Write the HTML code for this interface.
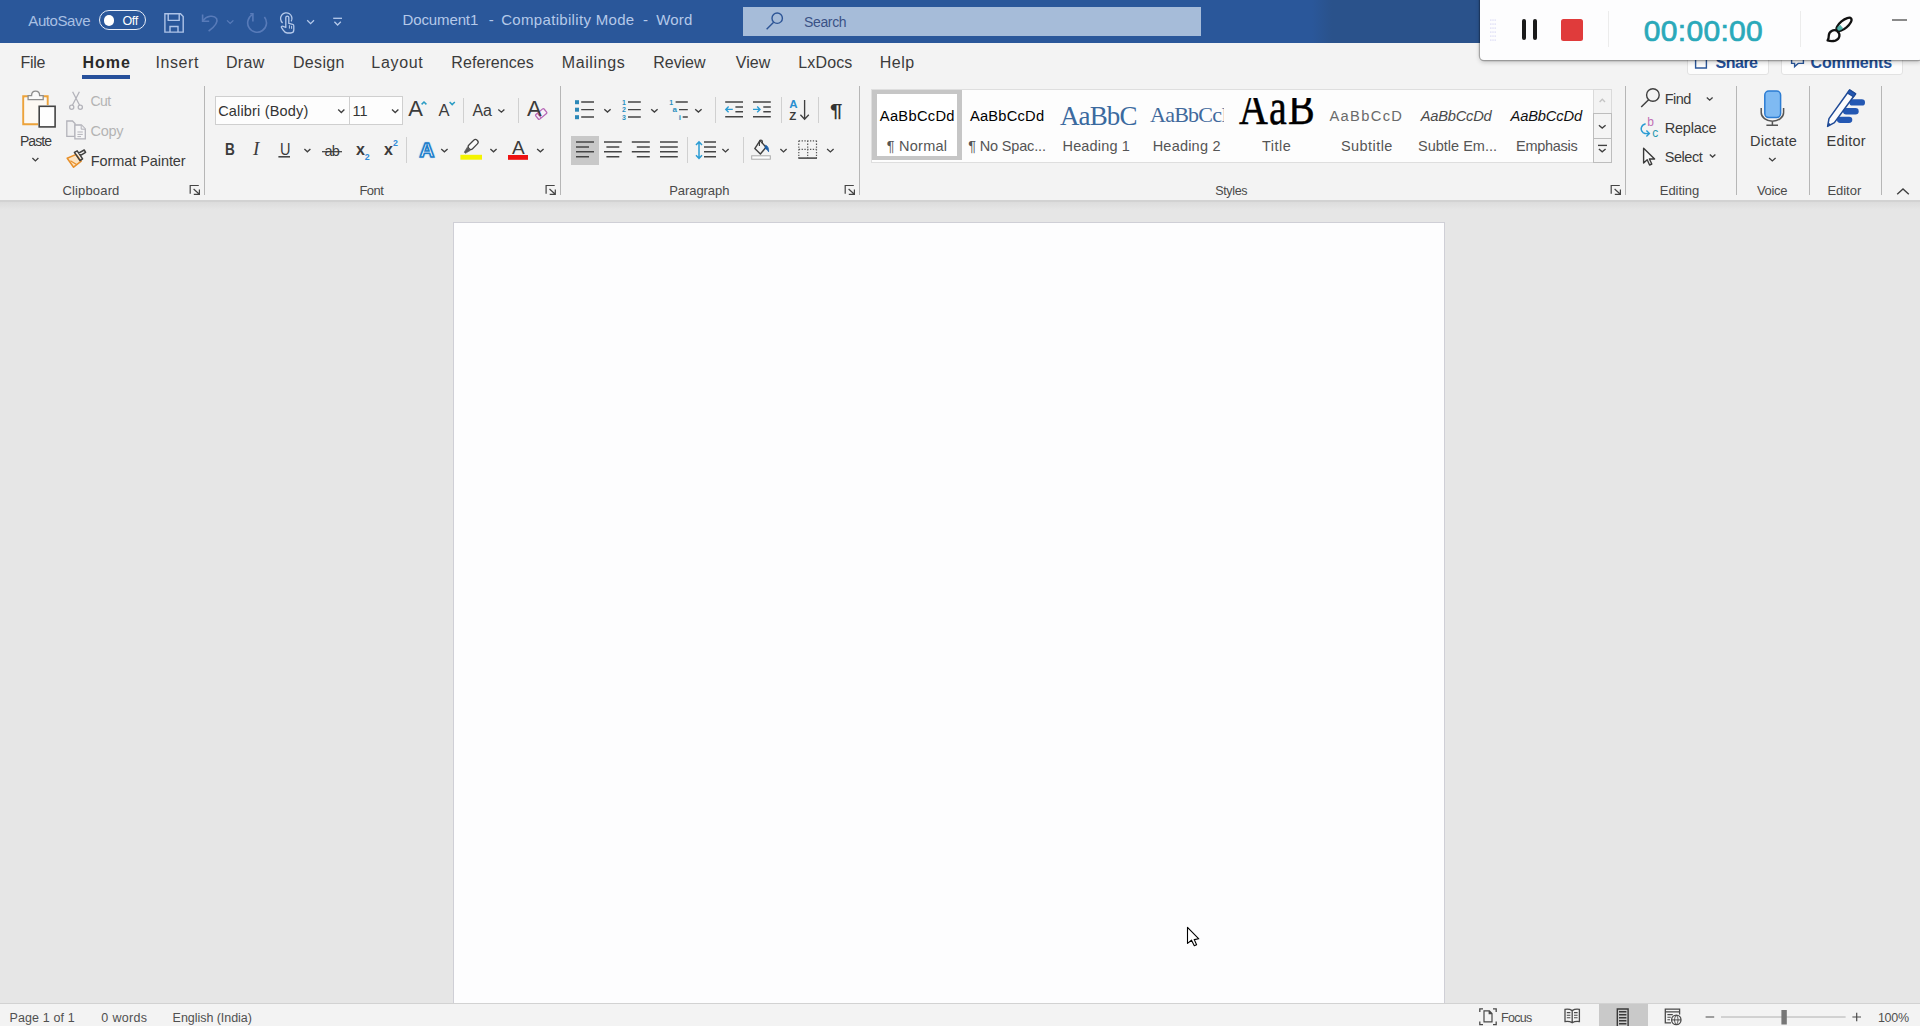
<!DOCTYPE html>
<html><head><meta charset="utf-8"><title>Document1 - Compatibility Mode - Word</title>
<style>
html,body{margin:0;padding:0;}
body{width:1920px;height:1026px;overflow:hidden;background:#e6e6e6;font-family:'Liberation Sans',sans-serif;}
#app{position:relative;width:1920px;height:1026px;overflow:hidden;}
.a{position:absolute;}
.t{position:absolute;line-height:1;white-space:pre;}
svg{position:absolute;overflow:visible;}
.vs{position:absolute;width:1px;background:#d0d0d0;}
.gs{position:absolute;width:1px;background:#b6b6b6;top:86px;height:109px;}
</style></head><body><div id="app">
<!-- title bar -->
<div class="a" style="left:0;top:0;width:1920px;height:43px;background:linear-gradient(90deg,#2a579a 0,#2a579a 1312px,#2a528b 1332px,#2a528b 100%);"></div>
<div class="a" style="left:743px;top:7px;width:458px;height:29px;background:#a6bcd9;"></div>
<!-- tab row + ribbon -->
<div class="a" style="left:0;top:43px;width:1920px;height:157px;background:#f3f3f3;"></div>
<div class="a" style="left:0;top:200px;width:1920px;height:2px;background:#d2d2d2;"></div>
<div class="a" style="left:0;top:202px;width:1920px;height:8px;background:linear-gradient(#dcdcdc,#e6e6e6);"></div>
<div class="a" style="left:82px;top:75px;width:48px;height:3.8px;background:#26509b;"></div>
<!-- page -->
<div class="a" style="left:453px;top:222px;width:992px;height:790px;background:#fdfdfe;border:1px solid #cfcfd6;box-sizing:border-box;"></div>
<!-- status bar -->
<div class="a" style="left:0;top:1003px;width:1920px;height:23px;background:#f3f3f3;border-top:1px solid #d2d2d2;box-sizing:border-box;"></div>
<div class="a" style="left:1598.5px;top:1003.5px;width:49.5px;height:23px;background:#c9c9c9;"></div>
<!-- group separators -->
<div class="gs" style="left:204px"></div>
<div class="gs" style="left:560px"></div>
<div class="gs" style="left:859px"></div>
<div class="gs" style="left:1625px"></div>
<div class="gs" style="left:1736px"></div>
<div class="gs" style="left:1809px"></div>
<div class="gs" style="left:1881px"></div>
<!-- font combos -->
<div class="a" style="left:215px;top:96px;width:188px;height:29px;background:#fdfdfd;border:1px solid #cfcfcf;box-sizing:border-box;"></div>
<div class="a" style="left:348.5px;top:96px;width:1px;height:29px;background:#cfcfcf;"></div>
<!-- small separators -->
<div class="vs" style="left:463px;top:98px;height:25px"></div>
<div class="vs" style="left:518px;top:98px;height:25px"></div>
<div class="vs" style="left:406px;top:137px;height:26px"></div>
<div class="vs" style="left:715px;top:97px;height:26px"></div>
<div class="vs" style="left:780.5px;top:97px;height:26px"></div>
<div class="vs" style="left:817.5px;top:97px;height:26px"></div>
<div class="vs" style="left:687px;top:137px;height:26px"></div>
<div class="vs" style="left:742.5px;top:137px;height:26px"></div>
<!-- align-left selected -->
<div class="a" style="left:571px;top:136px;width:28px;height:29px;background:#c8c8c8;"></div>
<!-- styles gallery -->
<div class="a" style="left:871px;top:89px;width:741px;height:74px;background:#fdfdfd;border:1px solid #dedede;box-sizing:border-box;"></div>
<div class="a" style="left:872px;top:90px;width:90px;height:70px;border:solid #c6c6c6;border-width:4px 5px;box-sizing:border-box;background:#fff;"></div>
<div class="a" style="left:1593px;top:89px;width:19px;height:25px;border:1px solid #dadada;box-sizing:border-box;background:#f3f3f3;"></div>
<div class="a" style="left:1593px;top:113px;width:19px;height:25.5px;border:1px solid #bdbdbd;box-sizing:border-box;background:#f4f4f4;"></div>
<div class="a" style="left:1593px;top:137.5px;width:19px;height:25px;border:1px solid #bdbdbd;box-sizing:border-box;background:#f4f4f4;"></div>
<!-- big Title sample (clipped) -->
<div class="a" style="left:1236px;top:97.7px;width:78.6px;height:32px;overflow:hidden;"><span class="t" style="left:3.4px;top:-15.7px;font-family:'Liberation Serif',serif;font-size:50px;color:#000;-webkit-text-stroke:.5px #000;letter-spacing:1.5px;transform:scaleX(.8);transform-origin:0 0;">AaB</span></div>
<!-- heading 2 sample (clipped) -->
<div class="a" style="left:1146px;top:100px;width:77.9px;height:30px;overflow:hidden;"><span class="t" style="left:4px;top:3.8px;font-family:'Liberation Serif',serif;font-size:22px;color:#41699c;letter-spacing:-.75px;">AaBbCcI</span></div>
<!-- share / comments buttons (behind widget) -->
<div class="a" style="left:1687px;top:45px;width:82px;height:30px;background:#fdfdfd;border:1px solid #e2e2e2;border-radius:3px;box-sizing:border-box;"></div>
<div class="a" style="left:1781px;top:45px;width:122px;height:30px;background:#fdfdfd;border:1px solid #e2e2e2;border-radius:3px;box-sizing:border-box;"></div>
<!-- title bar icons -->
<div class="a" style="left:98.8px;top:10.2px;width:47.4px;height:19.6px;border:1.4px solid #e8eef8;border-radius:10px;box-sizing:border-box;"></div>
<div class="a" style="left:103.6px;top:14.9px;width:10.8px;height:10.8px;border-radius:50%;background:#fff;"></div>
<svg style="left:0;top:0" width="360" height="43" viewBox="0 0 360 43" fill="none" stroke-width="1.4">
 <g stroke="#aec4e8">
  <path d="M164.9 13.8 H180.5 L183.2 16.5 V32.1 H164.9 Z"/>
  <path d="M168.2 13.8 V20.4 H179.2 V13.8"/>
  <path d="M170 32.1 V26.5 H178 V32.1"/>
 </g>
 <g stroke="#587bb9" stroke-width="1.6">
  <path d="M202.6 14.6 V21.2 H209.2"/>
  <path d="M203 20.8 C206.5 15.8 214 14.6 216.6 18.6 C218.6 22.4 213.5 27.5 208.6 31.2"/>
  <path d="M227 20.4 L230.2 23.4 L233.4 20.4" stroke-width="1.3"/>
  <path d="M250.2 13.8H252.9V21.4"/>
  <path d="M252.9 14.4A9.4 9.4 0 1 0 264.4 16.9"/>
 </g>
 <g stroke="#b6caeb" stroke-width="1.3">
  <path d="M282.6 22.9 A5.7 5.7 0 1 1 291.2 21.4"/>
  <path d="M285.8 27.5 V17.6 A1.5 1.5 0 0 1 288.8 17.6 V23.4 L292.6 24.3 A1.6 1.6 0 0 1 293.8 26 V29.8 C293.8 31.8 292.5 33 290.8 33 H287.2 C285.6 33 284.3 32 283.2 30.2 L281.4 27.4 C281 26.4 282.3 25.6 283.2 26.4 Z" stroke-linejoin="round"/>
  <path d="M289.4 25.2 V28.6 M291.6 25.8 V28.8" stroke-width="1"/>
  <path d="M307.2 20.3 L310.6 23.6 L314 20.3"/>
  <path d="M333.2 18.3 H342"/>
  <path d="M334.4 21.8 L337.6 25 L340.8 21.8"/>
 </g>
</svg>
<!-- search icon -->
<svg style="left:760px;top:8px" width="30" height="28" viewBox="760 8 30 28" fill="none" stroke="#2d5596" stroke-width="1.4">
 <circle cx="777.2" cy="18.2" r="5.2"/><path d="M773.6 22.2 L766.6 29.2"/>
</svg>
<!-- ribbon icons: coordinates are page pixels -->
<svg style="left:0;top:80px" width="1920" height="125" viewBox="0 80 1920 125" fill="none" stroke-linecap="butt">
<!-- paste -->
<g>
 <path d="M29 96.4 H23.3 V124.2 H38 M42.5 96.4 H47.6 V105" stroke="#eda33a" stroke-width="2.1"/>
 <path d="M24.4 97.5 H46.5 V123 H24.4 Z" fill="#fdf9f3" stroke="none"/>
 <path d="M28.1 99.6 V95.6 H31.6 C31.6 92.6 33.4 91.2 35.6 91.2 C37.8 91.2 39.6 92.6 39.6 95.6 H43.2 V99.6 Z" stroke="#8e8e8e" stroke-width="1.3" fill="#fbfbfb"/>
 <rect x="39.2" y="106.3" width="15.9" height="20.6" fill="#fefefe" stroke="#444" stroke-width="1.6"/>
</g>
<!-- cut (disabled) -->
<g stroke="#b3b3ba" stroke-width="1.3">
 <path d="M72.6 91.8 L79.6 105.2 M79.4 91.8 L72.4 105.2"/>
 <circle cx="71.7" cy="107.3" r="2.1"/><circle cx="80.3" cy="107.3" r="2.1"/>
</g>
<!-- copy (disabled) -->
<g stroke="#b3b3ba" stroke-width="1.3" fill="#f0f0f1">
 <path d="M66.8 121 H72.5 L75 123.6 V136.4 H66.8 Z"/>
 <path d="M74.9 125 H81.4 L85.3 129 V138.8 H74.9 Z" fill="#f6f6f7"/>
 <path d="M81.2 125.2 V129.2 H85.2 M77.4 132 H82.8 M77.4 134.4 H82.8 M77.4 136.6 H81" stroke-width="1"/>
</g>
<!-- format painter -->
<g>
 <path d="M67.2 158.2 L76.2 154.4 L81.2 161.2 L73.6 167.2 Z" fill="#fbe3c3" stroke="#e8902a" stroke-width="1.5" stroke-linejoin="round"/>
 <path d="M70.4 160.8 L76.6 164.6" stroke="#e8902a" stroke-width="1.2"/>
 <path d="M74.4 152.4 L77.2 150.8 L82.6 158.8 L80 160.6 Z M78.2 153.4 L84.2 150 L85.6 152.4 L79.8 155.8" stroke="#3f3f3f" stroke-width="1.5" stroke-linejoin="round"/>
</g>
</svg>
<svg style="left:0;top:80px" width="1920" height="125" viewBox="0 80 1920 125" fill="none" stroke="#404040" stroke-width="1.35">
<path d="M32.4 158.1L35.4 160.9L38.4 158.1M338.2 109.6L341.3 112.5L344.4 109.6M392.0 109.6L395.2 112.5L398.4 109.6M498.3 109.4L501.4 112.2L504.4 109.4M304.4 149.1L307.4 151.8L310.4 149.1M441.2 149.1L444.4 151.8L447.6 149.1M490.4 149.1L493.5 151.8L496.6 149.1M537.1 149.1L540.4 151.8L543.6 149.1M604.3 109.2L607.5 112.1L610.6 109.2M651.2 109.2L654.4 112.1L657.6 109.2M695.2 109.2L698.4 112.1L701.6 109.2M722.4 149.1L725.5 151.9L728.6 149.1M780.4 149.1L783.5 151.9L786.6 149.1M827.1 149.1L830.4 151.9L833.6 149.1M1706.8 97.6L1709.7 100.2L1712.6 97.6M1709.8 154.6L1712.6 157.0L1715.4 154.6M1769.1 158.1L1772.3 160.9L1775.6 158.1M1598.9 125.2L1602.2 128.0L1605.6 125.2M1598.9 149.0L1602.2 151.8L1605.6 149.0"/>
<path d="M1599.6 102L1602.3 99.2L1605 102" stroke="#c4c4c4"/>
<path d="M1598 145.4H1607"/>
<path d="M1897.2 194.2L1903 188.9L1908.8 194.2" stroke-width="1.4"/>
</svg>
<svg style="left:0;top:80px" width="1920" height="125" viewBox="0 80 1920 125" fill="none">
<!-- grow/shrink carets -->
<path d="M421.6 104.4L424 102L426.4 104.4M449.6 102L452.2 104.6L454.8 102" stroke="#2a9cc4" stroke-width="1.5"/>
<!-- clear formatting eraser -->
<g transform="rotate(-40 541.2 114)"><rect x="535.8" y="111" width="10.8" height="6" rx="1" fill="#f7f0f7" stroke="#b565b5" stroke-width="1.3"/><path d="M538.8 111V117" stroke="#b565b5" stroke-width="1.2"/></g>
<!-- underline of U -->
<path d="M278.4 156.8H290" stroke="#3b3b3b" stroke-width="1.5"/>
<!-- strike through ab -->
<path d="M322 151.7H342" stroke="#3b3b3b" stroke-width="1.2"/>
<!-- highlighter -->
<g transform="rotate(45 470.6 147)"><rect x="468" y="137.6" width="5.2" height="11.6" rx="2.4" stroke="#444" stroke-width="1.25" fill="#fbfbfb"/><path d="M468.4 149.6H472.8L471.4 155.2H469.8Z" fill="#5a5a5a" stroke="#5a5a5a" stroke-width=".6"/></g>
<rect x="460.4" y="154.8" width="21.6" height="4.9" fill="#f4f400"/>
<rect x="508" y="155" width="20" height="4.8" fill="#ee1111"/>
<!-- bullets -->
<g fill="#2b88b8"><rect x="575" y="100.2" width="4" height="4"/><rect x="575" y="107.7" width="4" height="4"/><rect x="575" y="115.2" width="4" height="4"/></g>
<path d="M581.2 102H594M581.2 109.6H594M581.2 117H594 M628 102H640.8M628 109.6H640.8M628 117H640.8 M675.6 102H687.8M679 109.6H687.8M682.7 117H687.8" stroke="#454545" stroke-width="1.3"/>
<!-- indent icons -->
<path d="M725.2 102H743M725.2 116.8H743M735.4 107H743M735.4 111.8H743 M753 102H770.8M753 116.8H770.8M763.3 107H770.8M763.3 111.8H770.8" stroke="#454545" stroke-width="1.4"/>
<path d="M732.8 109.4H725.8M728.6 106.6L725.8 109.4L728.6 112.2 M753 109.4H760M757.2 106.6L760 109.4L757.2 112.2" stroke="#2a9cd4" stroke-width="1.4"/>
<!-- sort arrow -->
<path d="M804.6 100V119M800.4 114.8L804.6 119.2L808.8 114.8" stroke="#404040" stroke-width="1.35"/>
<!-- align icons -->
<path d="M576 142H594M576 147H589M576 151.8H594M576 156.8H589 M604 142H621.8M606.4 147H619.3M604 151.8H621.8M606.4 156.8H619.3 M631.8 142H649.8M636.8 147H649.8M631.8 151.8H649.8M636.8 156.8H649.8 M660 142H677.8M660 147H677.8M660 151.8H677.8M660 156.8H677.8 M704 142H716M704 147H716M704 151.8H716M704 156.8H716" stroke="#454545" stroke-width="1.5"/>
<!-- line spacing arrow -->
<path d="M699 142V158.2M696 145L699 141.8L702 145M696 155.2L699 158.4L702 155.2" stroke="#2a9cd4" stroke-width="1.5"/>
<!-- shading -->
<path d="M760 140.6L754.8 148.6L760.4 154L766 147.2Z" stroke="#404040" stroke-width="1.4" stroke-linejoin="round"/>
<path d="M759.4 146V141.6A1.5 1.5 0 0 1 762.4 141.6V143.6" stroke="#404040" stroke-width="1.2"/>
<path d="M765.6 145.2C768 146 768.8 148.6 768.6 151.8C767.6 150 766.6 149 765 148.4Z" fill="#1d5fa8" stroke="#1d5fa8" stroke-width=".8"/>
<rect x="751.7" y="155.8" width="18.6" height="3.4" fill="#fdfdfd" stroke="#ababab" stroke-width="1"/>
<!-- borders -->
<path d="M798.8 140.8H816.6M798.8 149.4H816.6M798.8 140.8V158M807.7 140.8V158M816.5 140.8V158" stroke="#555" stroke-width="1.2" stroke-dasharray="1.3 1.5"/>
<path d="M798.3 158.1H817" stroke="#404040" stroke-width="1.5"/>
<!-- find -->
<circle cx="1652.9" cy="95" r="6.3" stroke="#404040" stroke-width="1.4"/><path d="M1648.6 99.8L1641.2 107" stroke="#404040" stroke-width="1.5"/>
<!-- replace arrow -->
<path d="M1645.6 123.8C1641.2 125 1639.6 129.6 1643 132.6C1644.4 133.6 1646.4 133.8 1649 133.6M1646.4 130.6L1649.4 133.6L1646.4 136.6" stroke="#2a9cd4" stroke-width="1.4"/>
<!-- select cursor -->
<path d="M1643.6 148.2V163L1647.2 159.8L1649.6 165L1651.8 164L1649.4 159L1654.6 159Z" stroke="#3a3a3a" stroke-width="1.4" stroke-linejoin="round" fill="#f8f8f8"/>
<!-- dictate mic -->
<rect x="1764.8" y="91" width="15.8" height="26.6" rx="4" fill="#7fbaf2" stroke="#2b7cd3" stroke-width="1.5"/>
<path d="M1761.2 108V112.6A11.2 8.6 0 0 0 1783.6 112.6V108M1772.4 121.2V125M1766.4 125.2H1778" stroke="#555" stroke-width="1.5"/>
<!-- editor -->
<g fill="#2458b3"><rect x="1849.4" y="99.2" width="15.6" height="6.4" rx="3.2"/><rect x="1843" y="108" width="15.7" height="6.4" rx="3.2"/><rect x="1837" y="116.7" width="15.3" height="6.3" rx="3.2"/></g>
<path d="M1849.6 90L1855.6 93.8L1834.4 122.6L1827.6 126.4L1829 118.6Z" fill="#fcfcfd" stroke="#1f4a96" stroke-width="1.5" stroke-linejoin="round"/>
<path d="M1849.6 90L1855.6 93.8L1853.4 96.8L1847.4 93Z" fill="#2458b3" stroke="#1f4a96" stroke-width="1.2" stroke-linejoin="round"/>
<path d="M1827.6 126.4L1828.4 122.4L1831 124.4Z" fill="#1f4a96"/>
</svg>
<!-- dialog launchers -->
<svg style="left:0;top:180px" width="1920" height="20" viewBox="0 180 1920 20" fill="none" stroke="#444" stroke-width="1.2">
<g id="lch"><path d="M190.2 193.8V185.5H198.8M193.6 189L199.4 194.2M199.4 189.6V194.3H193.8"/></g>
<path transform="translate(355.9 0)" d="M190.2 193.8V185.5H198.8M193.6 189L199.4 194.2M199.4 189.6V194.3H193.8"/>
<path transform="translate(655 0)" d="M190.2 193.8V185.5H198.8M193.6 189L199.4 194.2M199.4 189.6V194.3H193.8"/>
<path transform="translate(1421 0)" d="M190.2 193.8V185.5H198.8M193.6 189L199.4 194.2M199.4 189.6V194.3H193.8"/>
</svg>
<!-- share / comments icons (partly hidden under widget) -->
<svg style="left:1680px;top:50px" width="240" height="30" viewBox="1680 50 240 30" fill="none" stroke="#2b579a" stroke-width="1.4">
<path d="M1695.6 59V68H1706.4V59"/>
<path d="M1791.6 58V63.4H1794.6V66.6L1798.2 63.4H1803.4V58"/>
</svg>
<!-- status bar icons -->
<svg style="left:1470px;top:1003px" width="450" height="23" viewBox="1470 1003 450 23" fill="none" stroke="#4a4a4a" stroke-width="1.3">
<path d="M1479.8 1012V1008.9H1483M1493 1008.9H1496.2V1012M1479.8 1021.4V1024.6H1483M1493 1024.6H1496.2V1021.4"/>
<path d="M1484 1010.8H1489.4L1492 1013.4V1021.8H1484ZM1489.2 1011V1013.6H1491.8" stroke-width="1.2"/>
<path d="M1572.2 1010.6C1570 1009.2 1567.4 1009 1565 1009.4V1021.6C1567.4 1021.2 1570 1021.4 1572.2 1022.8C1574.400 1021.4 1577 1021.200 1579.400 1021.600V1009.400C1577 1009 1574.400 1009.200 1572.200 1010.600ZM1572.200 1010.600V1022.800"/>
<path d="M1566.800 1012.600H1570.400M1566.800 1015.200H1570.400M1566.800 1017.800H1570.400M1574 1012.600H1577.600M1574 1015.200H1577.600M1574 1017.800H1577.600" stroke-width="1.100"/>
<path d="M1617.300 1027V1009H1628.100V1027" stroke="#3a3a3a" stroke-width="1.400"/>
<path d="M1619 1011.800H1626.400M1619 1014.800H1626.400M1619 1017.800H1626.400M1619 1020.800H1626.400M1619 1023.800H1626.400" stroke="#3a3a3a" stroke-width="1.500"/>
<path d="M1671 1022.800H1665.300V1009.200H1679.600V1014.500M1665.300 1011.800H1679.600"/>
<path d="M1667.400 1014.600H1672.800M1667.400 1017.200H1670.800M1667.400 1019.800H1670" stroke-width="1.100"/>
<circle cx="1676.300" cy="1019.900" r="4.700" fill="#f3f3f3" stroke-width="1.300"/>
<path d="M1671.600 1019.900H1681M1676.300 1015.200C1674 1017.600 1674 1022.200 1676.300 1024.600M1676.300 1015.200C1678.600 1017.600 1678.600 1022.200 1676.300 1024.600" stroke-width="1"/>
<path d="M1705.600 1017H1714.200M1852.400 1017H1861M1856.700 1012.700V1021.300" stroke-width="1.200"/>
<path d="M1721 1017H1845.600" stroke="#b0b0b0" stroke-width="1"/>
<rect x="1781.400" y="1010" width="5.400" height="14.500" fill="#777" stroke="none"/>
</svg>
<!-- mouse cursor -->
<svg style="left:1180px;top:920px" width="30" height="34" viewBox="1180 920 30 34"><path d="M1187.500 927.400V943.400L1191.500 940.200L1194.300 945.800L1196.600 944.800L1194.200 939.600L1198.800 938.800Z" fill="#fff" stroke="#000" stroke-width="1.100" stroke-linejoin="round"/></svg>
<div class="a" style="left:0;top:0;width:1920px;height:80px;z-index:5;pointer-events:none;">
<!-- recorder widget -->
<div class="a" style="left:1480px;top:-10px;width:442px;height:69.7px;background:#fdfdfe;border-radius:0 0 4px 4px;box-shadow:0 0 0 1.2px rgba(0,0,0,.25),0 2px 5px rgba(0,0,0,.22);"></div>
<div class="a" style="left:1522px;top:19px;width:4.2px;height:20.8px;border-radius:2.2px;background:#1b1b1b;"></div>
<div class="a" style="left:1533px;top:19px;width:4.2px;height:20.8px;border-radius:2.2px;background:#1b1b1b;"></div>
<div class="a" style="left:1561px;top:19px;width:22px;height:21.5px;border-radius:2.5px;background:#e03b3b;"></div>
<div class="a" style="left:1607.5px;top:11px;width:1px;height:36px;background:#ececec;"></div>
<div class="a" style="left:1800px;top:11px;width:1px;height:36px;background:#ececec;"></div>
<div class="a" style="left:1892px;top:19px;width:14.5px;height:1.5px;background:#8a8a8a;"></div>
<!-- widget brush icon + drag dots -->
<svg style="left:1480px;top:0" width="440" height="60" viewBox="1480 0 440 60" fill="none">
<g transform="rotate(-40 1844 24.4)"><ellipse cx="1844" cy="24.4" rx="9.3" ry="3.9" fill="#fdfdfd" stroke="#111" stroke-width="2.3"/><path d="M1835.8 22.6C1837.8 21.8 1839.8 22 1840.8 22.6V26.8C1838.6 27.4 1836.8 26.8 1835.4 26Z" fill="#2a9d94" opacity=".8"/></g>
<path d="M1837 30.8C1833.400 29 1829 31.600 1828.800 35.400C1828.800 37.400 1828.600 38.800 1827.600 40.400C1830 41.200 1833 41.200 1835.400 40.600C1839.800 39.200 1841 34 1837 30.800Z" fill="#fdfdfd" stroke="#111" stroke-width="2.300" stroke-linejoin="round"/>
<g fill="#d3d3f3"><rect x="1490.2" y="19.5" width="1.2" height="1.2"/><rect x="1492.4" y="19.5" width="1.2" height="1.2"/><rect x="1494.6" y="19.5" width="1.2" height="1.2"/><rect x="1490.2" y="23.5" width="1.2" height="1.2"/><rect x="1492.4" y="23.5" width="1.2" height="1.2"/><rect x="1494.6" y="23.5" width="1.2" height="1.2"/><rect x="1490.2" y="27.5" width="1.2" height="1.2"/><rect x="1492.4" y="27.5" width="1.2" height="1.2"/><rect x="1494.6" y="27.5" width="1.2" height="1.2"/><rect x="1490.2" y="31.5" width="1.2" height="1.2"/><rect x="1492.4" y="31.5" width="1.2" height="1.2"/><rect x="1494.6" y="31.5" width="1.2" height="1.2"/><rect x="1490.2" y="35.5" width="1.2" height="1.2"/><rect x="1492.4" y="35.5" width="1.2" height="1.2"/><rect x="1494.6" y="35.5" width="1.2" height="1.2"/><rect x="1490.2" y="39.5" width="1.2" height="1.2"/><rect x="1492.4" y="39.5" width="1.2" height="1.2"/><rect x="1494.6" y="39.5" width="1.2" height="1.2"/></g>
</svg>
</div>

<!-- texts -->
<span class=t style="left:28.3px;top:13.0px;font-family:'Liberation Sans',sans-serif;font-size:15px;color:#a9c0e3;letter-spacing:-0.41px">AutoSave</span>
<span class=t style="left:122.6px;top:15.0px;font-family:'Liberation Sans',sans-serif;font-size:12.5px;color:#ffffff;letter-spacing:-0.45px">Off</span>
<span class=t style="left:402.5px;top:12.0px;font-family:'Liberation Sans',sans-serif;font-size:15px;color:#b5c9e9;letter-spacing:-0.12px">Document1</span>
<span class=t style="left:488.7px;top:12.0px;font-family:'Liberation Sans',sans-serif;font-size:15px;color:#b5c9e9;letter-spacing:0.00px">-</span>
<span class=t style="left:501.2px;top:12.0px;font-family:'Liberation Sans',sans-serif;font-size:15px;color:#b5c9e9;letter-spacing:0.32px">Compatibility Mode</span>
<span class=t style="left:643.0px;top:12.0px;font-family:'Liberation Sans',sans-serif;font-size:15px;color:#b5c9e9;letter-spacing:0.00px">-</span>
<span class=t style="left:656.2px;top:12.0px;font-family:'Liberation Sans',sans-serif;font-size:15px;color:#b5c9e9;letter-spacing:0.17px">Word</span>
<span class=t style="left:804.0px;top:15.0px;font-family:'Liberation Sans',sans-serif;font-size:14px;color:#3a5286;letter-spacing:-0.36px">Search</span>
<span class=t style="left:20.6px;top:55.0px;font-family:'Liberation Sans',sans-serif;font-size:16px;color:#3b3b3b;letter-spacing:-0.33px">File</span>
<span class=t style="left:82.5px;top:55.0px;font-family:'Liberation Sans',sans-serif;font-size:16px;font-weight:bold;color:#2a2a2a;letter-spacing:0.97px">Home</span>
<span class=t style="left:155.6px;top:55.0px;font-family:'Liberation Sans',sans-serif;font-size:16px;color:#3b3b3b;letter-spacing:0.56px">Insert</span>
<span class=t style="left:225.9px;top:55.0px;font-family:'Liberation Sans',sans-serif;font-size:16px;color:#3b3b3b;letter-spacing:0.37px">Draw</span>
<span class=t style="left:293.0px;top:55.0px;font-family:'Liberation Sans',sans-serif;font-size:16px;color:#3b3b3b;letter-spacing:0.32px">Design</span>
<span class=t style="left:371.3px;top:55.0px;font-family:'Liberation Sans',sans-serif;font-size:16px;color:#3b3b3b;letter-spacing:0.68px">Layout</span>
<span class=t style="left:451.3px;top:55.0px;font-family:'Liberation Sans',sans-serif;font-size:16px;color:#3b3b3b;letter-spacing:0.08px">References</span>
<span class=t style="left:561.7px;top:55.0px;font-family:'Liberation Sans',sans-serif;font-size:16px;color:#3b3b3b;letter-spacing:0.61px">Mailings</span>
<span class=t style="left:653.3px;top:55.0px;font-family:'Liberation Sans',sans-serif;font-size:16px;color:#3b3b3b;letter-spacing:-0.06px">Review</span>
<span class=t style="left:735.7px;top:55.0px;font-family:'Liberation Sans',sans-serif;font-size:16px;color:#3b3b3b;letter-spacing:0.10px">View</span>
<span class=t style="left:798.3px;top:55.0px;font-family:'Liberation Sans',sans-serif;font-size:16px;color:#3b3b3b;letter-spacing:0.14px">LxDocs</span>
<span class=t style="left:879.7px;top:55.0px;font-family:'Liberation Sans',sans-serif;font-size:16px;color:#3b3b3b;letter-spacing:0.53px">Help</span>
<span class=t style="left:1715.6px;top:55.0px;font-family:'Liberation Sans',sans-serif;font-size:16px;font-weight:bold;color:#234f96;letter-spacing:-0.52px">Share</span>
<span class=t style="left:1810.6px;top:55.0px;font-family:'Liberation Sans',sans-serif;font-size:16px;font-weight:bold;color:#234f96;letter-spacing:-0.16px">Comments</span>
<span class=t style="left:19.9px;top:134.0px;font-family:'Liberation Sans',sans-serif;font-size:14px;color:#3b3b3b;letter-spacing:-0.90px">Paste</span>
<span class=t style="left:90.5px;top:94.0px;font-family:'Liberation Sans',sans-serif;font-size:14px;color:#b4b4b4;letter-spacing:-0.60px">Cut</span>
<span class=t style="left:90.5px;top:124.0px;font-family:'Liberation Sans',sans-serif;font-size:14.5px;color:#b4b4b4;letter-spacing:-0.27px">Copy</span>
<span class=t style="left:90.7px;top:154.0px;font-family:'Liberation Sans',sans-serif;font-size:14.5px;color:#3b3b3b;letter-spacing:-0.07px">Format Painter</span>
<span class=t style="left:62.5px;top:184.0px;font-family:'Liberation Sans',sans-serif;font-size:13px;color:#4a4a4a;letter-spacing:0.15px">Clipboard</span>
<span class=t style="left:218.2px;top:104.0px;font-family:'Liberation Sans',sans-serif;font-size:14.5px;color:#333;letter-spacing:0.17px">Calibri (Body)</span>
<span class=t style="left:352.4px;top:104.0px;font-family:'Liberation Sans',sans-serif;font-size:14.5px;color:#333;letter-spacing:0.00px">11</span>
<span class=t style="left:472.5px;top:103.0px;font-family:'Liberation Sans',sans-serif;font-size:16px;color:#3b3b3b;letter-spacing:-0.20px">Aa</span>
<span class=t style="left:408.3px;top:98.0px;font-family:'Liberation Sans',sans-serif;font-size:22px;color:#3b3b3b;letter-spacing:0.00px">A</span>
<span class=t style="left:438.5px;top:102.0px;font-family:'Liberation Sans',sans-serif;font-size:16.5px;color:#3b3b3b;letter-spacing:0.00px">A</span>
<span class=t style="left:527.0px;top:98.0px;font-family:'Liberation Sans',sans-serif;font-size:22px;color:#3b3b3b;letter-spacing:0.00px">A</span>
<span class=t style="left:512.0px;top:138.0px;font-family:'Liberation Sans',sans-serif;font-size:19px;color:#3b3b3b;letter-spacing:0.00px">A</span>
<span class=t style="left:419.4px;top:140.0px;font-family:'Liberation Sans',sans-serif;font-size:20.5px;font-weight:bold;-webkit-text-stroke:1.6px #1f7fcb;text-shadow:0 0 2px #4aa8ec,0 0 2px #4aa8ec;color:#fff;letter-spacing:0.00px">A</span>
<span class=t style="left:789.2px;top:99.0px;font-family:'Liberation Sans',sans-serif;font-size:11.5px;font-weight:bold;color:#2a8fd0;letter-spacing:0.00px">A</span>
<span class=t style="left:789.2px;top:111.0px;font-family:'Liberation Sans',sans-serif;font-size:11.5px;font-weight:bold;color:#3a3a3a;letter-spacing:0.00px">Z</span>
<span class=t style="left:830.0px;top:103.0px;font-family:'Liberation Sans',sans-serif;font-size:17.5px;font-weight:bold;transform:scaleX(1.28);transform-origin:0 50%;color:#333;letter-spacing:0.00px">¶</span>
<span class=t style="left:622.0px;top:99.0px;font-family:'Liberation Sans',sans-serif;font-size:7px;font-weight:bold;color:#2a8fc0;letter-spacing:0.00px">1</span>
<span class=t style="left:622.0px;top:106.0px;font-family:'Liberation Sans',sans-serif;font-size:7px;font-weight:bold;color:#2a8fc0;letter-spacing:0.00px">2</span>
<span class=t style="left:622.0px;top:114.0px;font-family:'Liberation Sans',sans-serif;font-size:7px;font-weight:bold;color:#2a8fc0;letter-spacing:0.00px">3</span>
<span class=t style="left:669.3px;top:99.0px;font-family:'Liberation Sans',sans-serif;font-size:7px;font-weight:bold;color:#2a8fc0;letter-spacing:0.00px">1</span>
<span class=t style="left:672.4px;top:106.0px;font-family:'Liberation Sans',sans-serif;font-size:8px;font-weight:bold;color:#2a8fc0;letter-spacing:0.00px">a</span>
<span class=t style="left:678.7px;top:114.0px;font-family:'Liberation Sans',sans-serif;font-size:8px;font-weight:bold;color:#2a8fc0;letter-spacing:0.00px">i</span>
<span class=t style="left:1647.2px;top:116.0px;font-family:'Liberation Sans',sans-serif;font-size:12px;color:#bf6fb4;letter-spacing:0.00px">b</span>
<span class=t style="left:1652.2px;top:127.0px;font-family:'Liberation Sans',sans-serif;font-size:12px;color:#2a9ab0;letter-spacing:0.00px">c</span>
<span class=t style="left:225.2px;top:141.0px;font-family:'Liberation Sans',sans-serif;font-size:17px;font-weight:bold;transform:scaleX(.8);transform-origin:0 50%;color:#3b3b3b;letter-spacing:0.00px">B</span>
<span class=t style="left:253.0px;top:139.0px;font-family:'Liberation Serif',serif;font-size:19px;font-style:italic;color:#3b3b3b;letter-spacing:0.00px">I</span>
<span class=t style="left:279.8px;top:141.0px;font-family:'Liberation Sans',sans-serif;font-size:16.5px;transform:scaleX(.88);transform-origin:0 50%;color:#3b3b3b;letter-spacing:0.00px">U</span>
<span class=t style="left:324.6px;top:144.0px;font-family:'Liberation Sans',sans-serif;font-size:14.5px;color:#3b3b3b;letter-spacing:-0.90px">ab</span>
<span class=t style="left:356.1px;top:142.0px;font-family:'Liberation Sans',sans-serif;font-size:16px;font-weight:bold;color:#3b3b3b;letter-spacing:0.00px">x</span>
<span class=t style="left:364.7px;top:153.0px;font-family:'Liberation Sans',sans-serif;font-size:8.8px;font-weight:bold;color:#2e8ad8;letter-spacing:0.00px">2</span>
<span class=t style="left:384.0px;top:142.0px;font-family:'Liberation Sans',sans-serif;font-size:16px;font-weight:bold;color:#3b3b3b;letter-spacing:0.00px">x</span>
<span class=t style="left:393.1px;top:139.0px;font-family:'Liberation Sans',sans-serif;font-size:8.8px;font-weight:bold;color:#2e8ad8;letter-spacing:0.00px">2</span>
<span class=t style="left:359.4px;top:184.0px;font-family:'Liberation Sans',sans-serif;font-size:13px;color:#4a4a4a;letter-spacing:-0.53px">Font</span>
<span class=t style="left:669.2px;top:184.0px;font-family:'Liberation Sans',sans-serif;font-size:13px;color:#4a4a4a;letter-spacing:-0.06px">Paragraph</span>
<span class=t style="left:879.8px;top:109.0px;font-family:'Liberation Sans',sans-serif;font-size:14.7px;color:#000;letter-spacing:0.29px">AaBbCcDd</span>
<span class=t style="left:886.7px;top:139.0px;font-family:'Liberation Sans',sans-serif;font-size:14.5px;color:#555;letter-spacing:0.26px">¶ Normal</span>
<span class=t style="left:970.0px;top:109.0px;font-family:'Liberation Sans',sans-serif;font-size:14.7px;color:#000;letter-spacing:0.20px">AaBbCcDd</span>
<span class=t style="left:968.3px;top:139.0px;font-family:'Liberation Sans',sans-serif;font-size:14.5px;color:#555;letter-spacing:-0.17px">¶ No Spac...</span>
<span class=t style="left:1060.0px;top:103.0px;font-family:'Liberation Serif',serif;font-size:27px;color:#3b6a9f;letter-spacing:-0.90px">AaBbC</span>
<span class=t style="left:1062.5px;top:139.0px;font-family:'Liberation Sans',sans-serif;font-size:14.5px;color:#555;letter-spacing:0.16px">Heading 1</span>
<span class=t style="left:1152.7px;top:139.0px;font-family:'Liberation Sans',sans-serif;font-size:14.5px;color:#555;letter-spacing:0.21px">Heading 2</span>
<span class=t style="left:1262.0px;top:139.0px;font-family:'Liberation Sans',sans-serif;font-size:14.5px;color:#555;letter-spacing:0.50px">Title</span>
<span class=t style="left:1329.5px;top:109.0px;font-family:'Liberation Sans',sans-serif;font-size:14.7px;color:#6a6a6a;letter-spacing:1.32px">AaBbCcD</span>
<span class=t style="left:1341.0px;top:139.0px;font-family:'Liberation Sans',sans-serif;font-size:14.5px;color:#555;letter-spacing:0.43px">Subtitle</span>
<span class=t style="left:1420.7px;top:109.0px;font-family:'Liberation Sans',sans-serif;font-size:14.7px;font-style:italic;color:#4a4a4a;letter-spacing:-0.24px">AaBbCcDd</span>
<span class=t style="left:1418.0px;top:139.0px;font-family:'Liberation Sans',sans-serif;font-size:14.5px;color:#555;letter-spacing:0.00px">Subtle Em...</span>
<span class=t style="left:1510.5px;top:109.0px;font-family:'Liberation Sans',sans-serif;font-size:14.7px;font-style:italic;color:#111;letter-spacing:-0.14px">AaBbCcDd</span>
<span class=t style="left:1516.0px;top:139.0px;font-family:'Liberation Sans',sans-serif;font-size:14.5px;color:#555;letter-spacing:-0.29px">Emphasis</span>
<span class=t style="left:1215.2px;top:185.0px;font-family:'Liberation Sans',sans-serif;font-size:12.5px;color:#4a4a4a;letter-spacing:-0.34px">Styles</span>
<span class=t style="left:1664.7px;top:92.0px;font-family:'Liberation Sans',sans-serif;font-size:14.5px;color:#3b3b3b;letter-spacing:-0.50px">Find</span>
<span class=t style="left:1664.7px;top:121.0px;font-family:'Liberation Sans',sans-serif;font-size:14.5px;color:#3b3b3b;letter-spacing:-0.20px">Replace</span>
<span class=t style="left:1664.7px;top:150.0px;font-family:'Liberation Sans',sans-serif;font-size:14.5px;color:#3b3b3b;letter-spacing:-0.44px">Select</span>
<span class=t style="left:1659.8px;top:184.0px;font-family:'Liberation Sans',sans-serif;font-size:13px;color:#4a4a4a;letter-spacing:-0.05px">Editing</span>
<span class=t style="left:1750.0px;top:134.0px;font-family:'Liberation Sans',sans-serif;font-size:14.5px;color:#3b3b3b;letter-spacing:0.28px">Dictate</span>
<span class=t style="left:1756.9px;top:184.0px;font-family:'Liberation Sans',sans-serif;font-size:13px;color:#4a4a4a;letter-spacing:-0.30px">Voice</span>
<span class=t style="left:1826.5px;top:134.0px;font-family:'Liberation Sans',sans-serif;font-size:14.5px;color:#3b3b3b;letter-spacing:0.24px">Editor</span>
<span class=t style="left:1827.4px;top:184.0px;font-family:'Liberation Sans',sans-serif;font-size:13px;color:#4a4a4a;letter-spacing:-0.02px">Editor</span>
<span class=t style="left:9.5px;top:1012.0px;font-family:'Liberation Sans',sans-serif;font-size:12.5px;color:#505050;letter-spacing:0.12px">Page 1 of 1</span>
<span class=t style="left:101.3px;top:1012.0px;font-family:'Liberation Sans',sans-serif;font-size:12.5px;color:#505050;letter-spacing:0.33px">0 words</span>
<span class=t style="left:172.6px;top:1012.0px;font-family:'Liberation Sans',sans-serif;font-size:12.5px;color:#505050;letter-spacing:-0.04px">English (India)</span>
<span class=t style="left:1500.9px;top:1012.0px;font-family:'Liberation Sans',sans-serif;font-size:12.5px;color:#505050;letter-spacing:-0.65px">Focus</span>
<span class=t style="left:1877.9px;top:1012.0px;font-family:'Liberation Sans',sans-serif;font-size:12.5px;color:#505050;letter-spacing:-0.23px">100%</span>
<span class=t style="left:1643.8px;top:16.0px;font-family:'Liberation Sans',sans-serif;font-size:30px;-webkit-text-stroke:.7px #2aa9ba;z-index:6;color:#2aa9ba;letter-spacing:0.31px">00:00:00</span>
</div></body></html>
